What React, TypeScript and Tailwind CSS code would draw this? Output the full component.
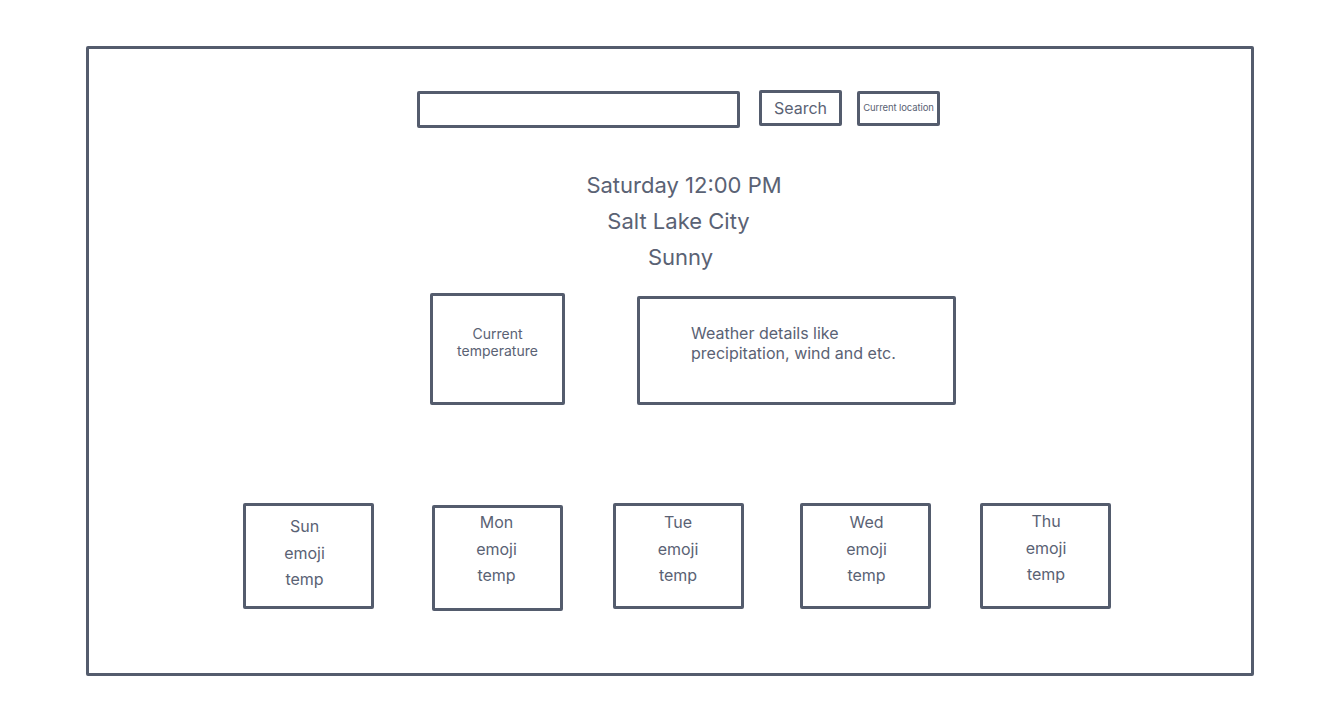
const days = [
  { name: "Sun", box: "mt-0", text: "pt-[7px] pr-[8px]" },
  { name: "Mon", box: "mt-[2px]", text: "pt-[1px] pr-[2px]" },
  { name: "Tue", box: "mt-0", text: "pt-[3px] pr-[1px]" },
  { name: "Wed", box: "mt-0", text: "pt-[3px] pl-[2px]" },
  { name: "Thu", box: "mt-0", text: "pt-[2px] pl-[1px]" },
];

const gaps = ["ml-0", "ml-[58px]", "ml-[50px]", "ml-[56px]", "ml-[49px]"];

export default function App() {
  return (
    <div className="min-h-screen bg-white font-['Inter','Liberation_Sans',sans-serif] text-[#5a6274]">
      <div className="pt-[46px] pl-[86px]">
        <div className="w-[1168px] h-[630px] border-[3px] border-[#545c6d] rounded-[2px] flex flex-col">
          {/* search row */}
          <div className="flex items-start pl-[328px] pt-[42px]">
            <div className="w-[323px] h-[37px] border-[3px] border-[#545c6d] rounded-[2px]" />
            <div className="ml-[19px] -mt-[1px] w-[83px] h-[36px] border-[3px] border-[#545c6d] rounded-[2px] flex items-center justify-center text-[16px]">
              Search
            </div>
            <div className="ml-[15px] w-[83px] h-[35px] border-[3px] border-[#545c6d] rounded-[2px] flex items-center justify-center text-[9.5px] tracking-[-0.1px]">
              Current location
            </div>
          </div>

          {/* headline */}
          <div className="mt-[39px] flex flex-col items-center pl-[21px] text-[22px] leading-[36px]">
            <div className="ml-[7px]">Saturday 12:00 PM</div>
            <div className="-ml-[4px]">Salt Lake City</div>
            <div>Sunny</div>
          </div>

          {/* current + details */}
          <div className="mt-[18px] flex items-start pl-[341px]">
            <div className="w-[135px] h-[112px] border-[3px] border-[#545c6d] rounded-[2px] pt-[29px] text-center text-[14px] leading-[17px]">
              <div>Current</div>
              <div>temperature</div>
            </div>
            <div className="ml-[72px] mt-[3px] w-[319px] h-[109px] border-[3px] border-[#545c6d] rounded-[2px] pt-[24px] pl-[51px] text-[16px] leading-[20px]">
              <div>Weather details like</div>
              <div>precipitation, wind and etc.</div>
            </div>
          </div>

          {/* forecast */}
          <div className="mt-[98px] flex items-start pl-[154px]">
            {days.map((d, i) => (
              <div
                key={d.name}
                className={`${gaps[i]} ${d.box} w-[131px] h-[106px] border-[3px] border-[#545c6d] rounded-[2px] flex flex-col items-center text-[16px] leading-[26.5px] ${d.text}`}
              >
                <div>{d.name}</div>
                <div>emoji</div>
                <div>temp</div>
              </div>
            ))}
          </div>
        </div>
      </div>
    </div>
  );
}
